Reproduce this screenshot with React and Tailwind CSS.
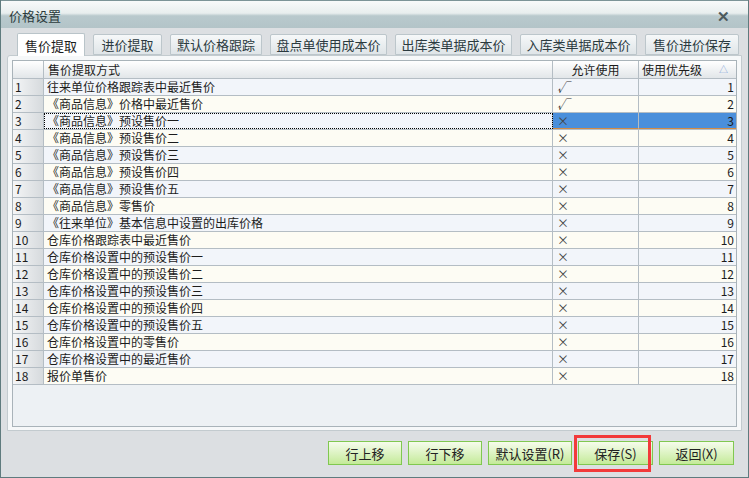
import React from "react";

const rows = [
  ["往来单位价格跟踪表中最近售价", true],
  ["《商品信息》价格中最近售价", true],
  ["《商品信息》预设售价一", false],
  ["《商品信息》预设售价二", false],
  ["《商品信息》预设售价三", false],
  ["《商品信息》预设售价四", false],
  ["《商品信息》预设售价五", false],
  ["《商品信息》零售价", false],
  ["《往来单位》基本信息中设置的出库价格", false],
  ["仓库价格跟踪表中最近售价", false],
  ["仓库价格设置中的预设售价一", false],
  ["仓库价格设置中的预设售价二", false],
  ["仓库价格设置中的预设售价三", false],
  ["仓库价格设置中的预设售价四", false],
  ["仓库价格设置中的预设售价五", false],
  ["仓库价格设置中的零售价", false],
  ["仓库价格设置中的最近售价", false],
  ["报价单售价", false],
];

const tabs = [
  ["进价提取", "w-[69px]"],
  ["默认价格跟踪", "w-[92px]"],
  ["盘点单使用成本价", "w-[117px]"],
  ["出库类单据成本价", "w-[117px]"],
  ["入库类单据成本价", "w-[117px]"],
  ["售价进价保存", "w-[94px]"],
];

const buttons = [
  ["行上移", "w-[74px]"],
  ["行下移", "w-[74px]"],
  ["默认设置(R)", "w-[84px]"],
  ["保存(S)", "w-[75px]"],
  ["返回(X)", "w-[75px]"],
];

export default function App() {
  return (
    <div className="w-[749px] h-[478px] flex flex-col bg-[#dcdfe2] border-x border-b border-[#5f7b7e] text-[12px] text-[#1c1c1c] font-['Noto_Sans_CJK_SC','Noto_Sans',sans-serif] leading-none overflow-hidden">
      {/* Title bar */}
      <div className="h-[28px] shrink-0 flex items-center justify-between pl-[8px] pr-[18px] border-t border-[#7c9497] bg-[linear-gradient(to_bottom,#f8fafa_0%,#e8eeee_45%,#b9c9cd_55%,#b3c4c8_100%)]">
        <span className="text-[13px] text-[#2c3b3d] pt-[2px]">价格设置</span>
        <span className="text-[15px] text-[#4c5a5c] font-bold pt-[2px]">✕</span>
      </div>

      {/* Tabs */}
      <div className="h-[27px] shrink-0 flex items-end gap-[8px] pl-[16px] pt-[5px]">
        <div className="w-[68px] h-[23px] flex items-center justify-center bg-white border border-b-0 border-[#b9c4c9] rounded-t-[2px] text-[13px] relative top-[1px] z-10">
          售价提取
        </div>
        {tabs.map(([t, w]) => (
          <div
            key={t}
            className={`${w} h-[21px] flex items-center justify-center border border-[#bcc6cb] rounded-t-[2px] bg-gradient-to-b from-[#f6f8f9] to-[#dfe5e8] text-[13px] text-[#2b3a3f]`}
          >
            {t}
          </div>
        ))}
      </div>

      {/* Panel */}
      <div className="mx-[6px] h-[376px] shrink-0 border border-[#c3cbcf] rounded-tl-[3px] bg-[#f6f8f9] px-[4px] pt-[4px] pb-[3px] flex">
        <div className="flex-1 flex flex-col border border-[#a9b3b9] bg-[#edf1f4]">
          {/* Header */}
          <div className="h-[18px] flex border-b border-[#b4bdc4] bg-gradient-to-b from-white to-[#e2e6e9]">
            <div className="w-[31px] border-r border-[#b4bdc4]" />
            <div className="w-[509px] border-r border-[#b4bdc4] flex items-center pl-[4px]">售价提取方式</div>
            <div className="w-[86px] border-r border-[#b4bdc4] flex items-center justify-center">允许使用</div>
            <div className="flex-1 flex items-center justify-between pl-[3px] pr-[8px]">
              <span>使用优先级</span>
              <span className="text-[9px] text-[#7f9fd6]">△</span>
            </div>
          </div>
          {rows.map(([name, ok], i) => {
            const sel = i === 2;
            const bg = i % 2 === 0 ? "bg-[#f2f5fa]" : "bg-[#fdfcf4]";
            return (
              <div key={i} className="h-[17px] flex border-b border-[#b4bdc4] overflow-hidden">
                <div className="w-[31px] border-r border-[#b4bdc4] bg-gradient-to-r from-[#f5f6f7] to-[#d6dadd] flex items-center pl-[2px]">
                  {i + 1}
                </div>
                <div
                  className={`w-[509px] border-r border-[#b4bdc4] ${bg} flex items-center pl-[3px] ${
                    sel ? "outline outline-1 outline-dotted outline-black -outline-offset-1" : ""
                  }`}
                >
                  {name}
                </div>
                <div
                  className={`w-[86px] border-r border-[#b4bdc4] flex items-center pl-[4px] overflow-hidden ${
                    sel ? "bg-[#4a8fdb] border-b border-b-[#d08a45]" : bg
                  } text-[#333]`}
                >
                  {ok ? (
                    <span className="italic text-[12px] leading-none">√</span>
                  ) : (
                    <span className="text-[12px] leading-none text-[#444]">×</span>
                  )}
                </div>
                <div
                  className={`flex-1 flex items-center justify-end pr-[2px] ${
                    sel ? "bg-[#4a8fdb] border-b border-[#d08a45]" : bg
                  }`}
                >
                  {i + 1}
                </div>
              </div>
            );
          })}
        </div>
      </div>

      {/* Buttons */}
      <div className="flex-1 flex items-start justify-end gap-[6px] pr-[14px] pt-[10px]">
        {buttons.map(([t, w]) => (
          <div key={t} className="relative">
            <div
              className={`${w} h-[24px] flex items-center justify-center border border-[#80c850] bg-gradient-to-b from-[#f6fcec] to-[#c4ea98] text-[13px] text-[#222]`}
            >
              {t}
            </div>
            {t === "保存(S)" && (
              <div className="absolute left-[-4px] top-[-6px] w-[77px] h-[37px] border-[3px] border-[#f23a3a]" />
            )}
          </div>
        ))}
      </div>
    </div>
  );
}
